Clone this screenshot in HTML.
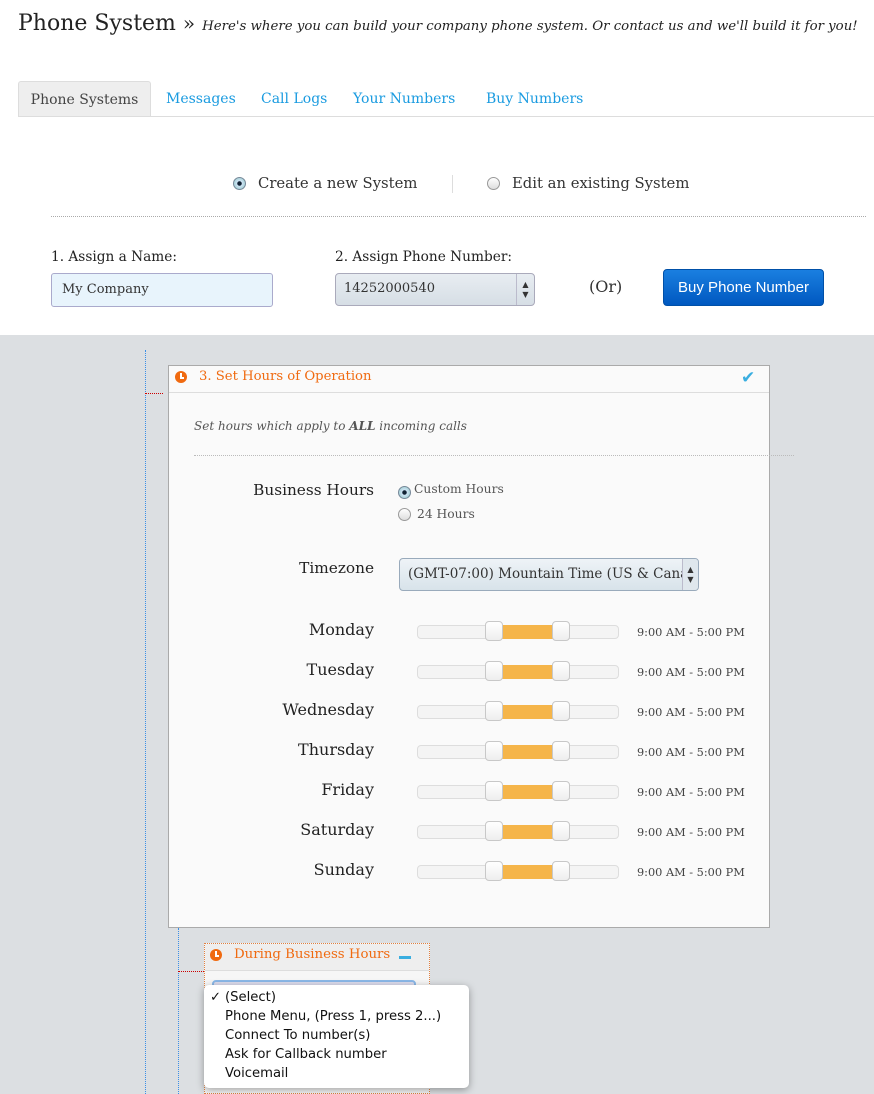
<!DOCTYPE html>
<html><head><meta charset="utf-8"><style>
*{box-sizing:border-box;margin:0;padding:0}
body{width:874px;height:1094px;overflow:hidden;background:#fff;font-family:"DejaVu Serif",serif;color:#222;position:relative}
.a{position:absolute;white-space:nowrap}
.gray{position:absolute;left:0;top:335px;width:874px;height:759px;background:#dcdfe2}
.tabs .t{position:absolute;top:81px;height:36px;line-height:36px;font-size:14px;color:#1a9be0}
.radio{position:absolute;width:13px;height:13px;border-radius:50%;border:1px solid #999;background:linear-gradient(#fff,#ddd)}
.radio.on{background:radial-gradient(circle,#123 0 2px,#cfe3f5 2.5px,#9cc 7px);border-color:#789}
.day{position:absolute;left:180px;width:194px;text-align:right;font-size:16px}
.track{position:absolute;left:417px;width:202px;height:14px;border:1px solid #ddd;border-radius:4px;background:#f4f4f4}
.fill{position:absolute;left:494px;width:67px;height:14px;background:#f5b54a}
.h{position:absolute;width:18px;height:20px;border:1px solid #c8c8c8;border-radius:4px;background:linear-gradient(#fff,#eee)}
.tm{position:absolute;left:637px;font-size:11.3px;color:#444}
.clk{position:absolute;width:12px;height:12px;border-radius:50%;background:#f06a10}
.clk:before{content:"";position:absolute;left:5px;top:2px;width:2px;height:5px;background:#fff}
.clk:after{content:"";position:absolute;left:5px;top:6px;width:4px;height:2px;background:#fff}
</style></head><body>
<div class="a" style="left:18px;top:11px;font-size:22px;color:#222">Phone System <span style="font-size:20px">»</span> <i style="font-size:13.3px">Here's where you can build your company phone system. Or contact us and we'll build it for you!</i></div>
<div class="tabs">
<div class="t" style="left:18px;width:133px;background:#eee;border:1px solid #ddd;border-bottom:none;color:#444;text-align:center;border-radius:3px 3px 0 0">Phone Systems</div>
<div class="t" style="left:166px">Messages</div>
<div class="t" style="left:261px">Call Logs</div>
<div class="t" style="left:353px">Your Numbers</div>
<div class="t" style="left:486px">Buy Numbers</div>
</div>
<div class="a" style="left:18px;top:116px;width:856px;border-top:1px solid #ddd"></div>
<div class="radio on" style="left:233px;top:177px"></div>
<div class="a" style="left:258px;top:175px;font-size:14.8px;color:#333">Create a new System</div>
<div class="a" style="left:452px;top:175px;height:18px;border-left:1px solid #ddd"></div>
<div class="radio" style="left:487px;top:177px"></div>
<div class="a" style="left:512px;top:175px;font-size:14.8px;color:#333">Edit an existing System</div>
<div class="a" style="left:51px;top:216px;width:815px;border-top:1px dotted #aaa"></div>
<div class="a" style="left:51px;top:249px;font-size:13.7px">1. Assign a Name:</div>
<div class="a" style="left:335px;top:249px;font-size:13.7px">2. Assign Phone Number:</div>
<div class="a" style="left:51px;top:273px;width:222px;height:34px;background:#e8f4fc;border:1px solid #aac;border-radius:3px;padding:8px 10px;font-size:13px;color:#333">My Company</div>
<div class="a" style="left:335px;top:273px;width:200px;height:33px;background:linear-gradient(#e8edf2,#d6dee5);border:1px solid #aab;border-radius:4px;padding:7px 8px;font-size:13px;color:#333">14252000540<span style="position:absolute;right:0;top:0;width:18px;height:31px;border-left:1px solid #bbc;text-align:center;font-size:8px;line-height:10px;padding-top:6px">▲<br>▼</span></div>
<div class="a" style="left:589px;top:277px;font-size:16px;color:#333">(Or)</div>
<div class="a" style="left:663px;top:269px;width:161px;height:37px;background:linear-gradient(#1a7fe0,#0058c0);border:1px solid #0050a8;border-radius:4px;color:#fff;font-family:'Liberation Sans',sans-serif;font-size:15px;text-align:center;line-height:35px">Buy Phone Number</div>

<div class="gray"></div>
<div class="a" style="left:145px;top:350px;height:744px;border-left:1px dotted #3a8ee6"></div>
<div class="a" style="left:145px;top:393px;width:18px;border-top:1px dotted #c00"></div>
<div class="a" style="left:168px;top:365px;width:602px;height:563px;background:#fafafa;border:1px solid #aaa"></div>
<div class="a" style="left:169px;top:392px;width:600px;border-top:1px solid #ddd"></div>
<div class="clk" style="left:175px;top:371px"></div>
<div class="a" style="left:199px;top:369px;font-size:13.2px;color:#f06a10">3. Set Hours of Operation</div>
<div class="a" style="left:741px;top:368px;font-size:17px;color:#3aaee0;font-family:'DejaVu Sans',sans-serif;font-weight:bold">✔</div>
<div class="a" style="left:194px;top:419px;font-size:12px;font-style:italic;color:#555">Set hours which apply to <b>ALL</b> incoming calls</div>
<div class="a" style="left:194px;top:455px;width:600px;border-top:1px dotted #bbb"></div>
<div class="day" style="top:481px;font-size:15.3px">Business Hours</div>
<div class="radio on" style="left:398px;top:486px"></div>
<div class="a" style="left:414px;top:482px;font-size:12.3px;color:#555">Custom Hours</div>
<div class="radio" style="left:398px;top:508px"></div>
<div class="a" style="left:417px;top:507px;font-size:12.3px;color:#555">24 Hours</div>
<div class="day" style="top:559px;font-size:15.3px">Timezone</div>
<div class="a" style="left:399px;top:558px;width:300px;height:33px;background:linear-gradient(#eef3f7,#d8e3ea);border:1px solid #9ab;border-radius:4px;padding:7px 8px;font-size:13.5px;color:#333;overflow:hidden">(GMT-07:00) Mountain Time (US &amp; Canad<span style="position:absolute;right:0;top:0;width:16px;height:31px;border-left:1px solid #bbc;background:#dfe7ed;text-align:center;font-size:8px;line-height:10px;padding-top:6px">▲<br>▼</span></div>

<div class="day" style="top:620px">Monday</div><div class="track" style="top:625px"></div><div class="fill" style="top:625px"></div><div class="h" style="left:485px;top:621px"></div><div class="h" style="left:552px;top:621px"></div><div class="tm" style="top:626px">9:00 AM - 5:00 PM</div>
<div class="day" style="top:660px">Tuesday</div><div class="track" style="top:665px"></div><div class="fill" style="top:665px"></div><div class="h" style="left:485px;top:661px"></div><div class="h" style="left:552px;top:661px"></div><div class="tm" style="top:666px">9:00 AM - 5:00 PM</div>
<div class="day" style="top:700px">Wednesday</div><div class="track" style="top:705px"></div><div class="fill" style="top:705px"></div><div class="h" style="left:485px;top:701px"></div><div class="h" style="left:552px;top:701px"></div><div class="tm" style="top:706px">9:00 AM - 5:00 PM</div>
<div class="day" style="top:740px">Thursday</div><div class="track" style="top:745px"></div><div class="fill" style="top:745px"></div><div class="h" style="left:485px;top:741px"></div><div class="h" style="left:552px;top:741px"></div><div class="tm" style="top:746px">9:00 AM - 5:00 PM</div>
<div class="day" style="top:780px">Friday</div><div class="track" style="top:785px"></div><div class="fill" style="top:785px"></div><div class="h" style="left:485px;top:781px"></div><div class="h" style="left:552px;top:781px"></div><div class="tm" style="top:786px">9:00 AM - 5:00 PM</div>
<div class="day" style="top:820px">Saturday</div><div class="track" style="top:825px"></div><div class="fill" style="top:825px"></div><div class="h" style="left:485px;top:821px"></div><div class="h" style="left:552px;top:821px"></div><div class="tm" style="top:826px">9:00 AM - 5:00 PM</div>
<div class="day" style="top:860px">Sunday</div><div class="track" style="top:865px"></div><div class="fill" style="top:865px"></div><div class="h" style="left:485px;top:861px"></div><div class="h" style="left:552px;top:861px"></div><div class="tm" style="top:866px">9:00 AM - 5:00 PM</div>

<div class="a" style="left:178px;top:928px;height:166px;border-left:1px dotted #3a8ee6"></div>
<div class="a" style="left:178px;top:971px;width:26px;border-top:1px dotted #c00"></div>
<div class="a" style="left:204px;top:943px;width:226px;height:151px;background:#f6f6f6;border:1px dotted #e08040"></div>
<div class="a" style="left:205px;top:944px;width:224px;height:27px;background:#eee;border-bottom:1px solid #ddd"></div>
<div class="clk" style="left:210px;top:949px"></div>
<div class="a" style="left:234px;top:947px;font-size:13.3px;color:#f06a10">During Business Hours</div>
<div class="a" style="left:399px;top:956px;width:12px;height:3px;background:#3aaee0"></div>
<div class="a" style="left:212px;top:980px;width:204px;height:30px;border:2px solid #8ab8e8;border-radius:4px;background:#dde"></div>
<div class="a" style="left:204px;top:985px;width:265px;height:103px;background:#fff;border-radius:5px;box-shadow:0 2px 8px rgba(0,0,0,.35);font-family:'DejaVu Sans',sans-serif;font-size:13.2px;color:#111;line-height:19px;padding:3px 0 0 0">
<div style="position:absolute;left:6px;top:3px">✓</div>
<div style="padding-left:21px">(Select)<br>Phone Menu, (Press 1, press 2...)<br>Connect To number(s)<br>Ask for Callback number<br>Voicemail</div></div>
</body></html>
